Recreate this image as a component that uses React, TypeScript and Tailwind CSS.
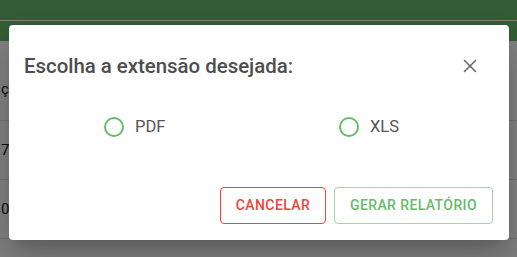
import { X } from "lucide-react";

const rows = ["ç", "7", "0"];

function Radio({ label }: { label: string }) {
  return (
    <label className="flex items-center gap-[11px] cursor-pointer">
      <span className="h-[20px] w-[20px] rounded-full border-2 border-[#66bb6a]" />
      <span className="text-[16.5px] text-[#555]">{label}</span>
    </label>
  );
}

export default function App() {
  return (
    <div
      className="relative h-[257px] w-[517px] overflow-hidden bg-white"
      style={{ fontFamily: "Roboto, 'Liberation Sans', sans-serif" }}
    >
      {/* page behind the modal */}
      <div className="h-[20px] bg-[#66bb6a]" />
      <div className="h-px bg-[#fff]" />
      <div className="h-[20px] bg-[#66bb6a]" />
      <div className="flex flex-col">
        {rows.map((r, i) => (
          <div
            key={i}
            className={`flex h-[59px] items-center border-b border-[#e0e0e0] pl-[1px] text-[15px] text-[#222] ${i === 0 ? "h-[80px] pt-[18px]" : ""}`}
          >
            {r}
          </div>
        ))}
      </div>

      <div className="absolute inset-0 bg-black/50" />

      {/* modal */}
      <div className="absolute left-[9px] top-[25px] flex h-[215px] w-[500px] flex-col rounded-[4px] bg-white shadow-[0_11px_15px_-7px_rgba(0,0,0,0.2),0_24px_38px_3px_rgba(0,0,0,0.14)]">
        <div className="flex items-center justify-between pl-[15px] pr-[28px] pt-[28px]">
          <h2 className="text-[20.4px] leading-[26px] font-medium text-[#4d4d4d]">
            Escolha a extensão desejada:
          </h2>
          <button className="text-[#666]">
            <X size={22} strokeWidth={1.6} />
          </button>
        </div>
        <div className="mt-[36px] flex pl-[95px]">
          <div className="w-[235px]">
            <Radio label="PDF" />
          </div>
          <Radio label="XLS" />
        </div>
        <div className="mt-auto mb-[16px] flex justify-end gap-[8px] pr-[16px]">
          <button className="h-[37px] w-[106px] rounded-[4px] border border-[#f44336] text-[14px] font-medium tracking-[0.4px] text-[#f44336]">
            CANCELAR
          </button>
          <button className="h-[37px] w-[159px] rounded-[4px] border border-[#a5d6a7] text-[14px] font-medium tracking-[0.4px] text-[#66bb6a]">
            GERAR RELATÓRIO
          </button>
        </div>
      </div>
    </div>
  );
}
